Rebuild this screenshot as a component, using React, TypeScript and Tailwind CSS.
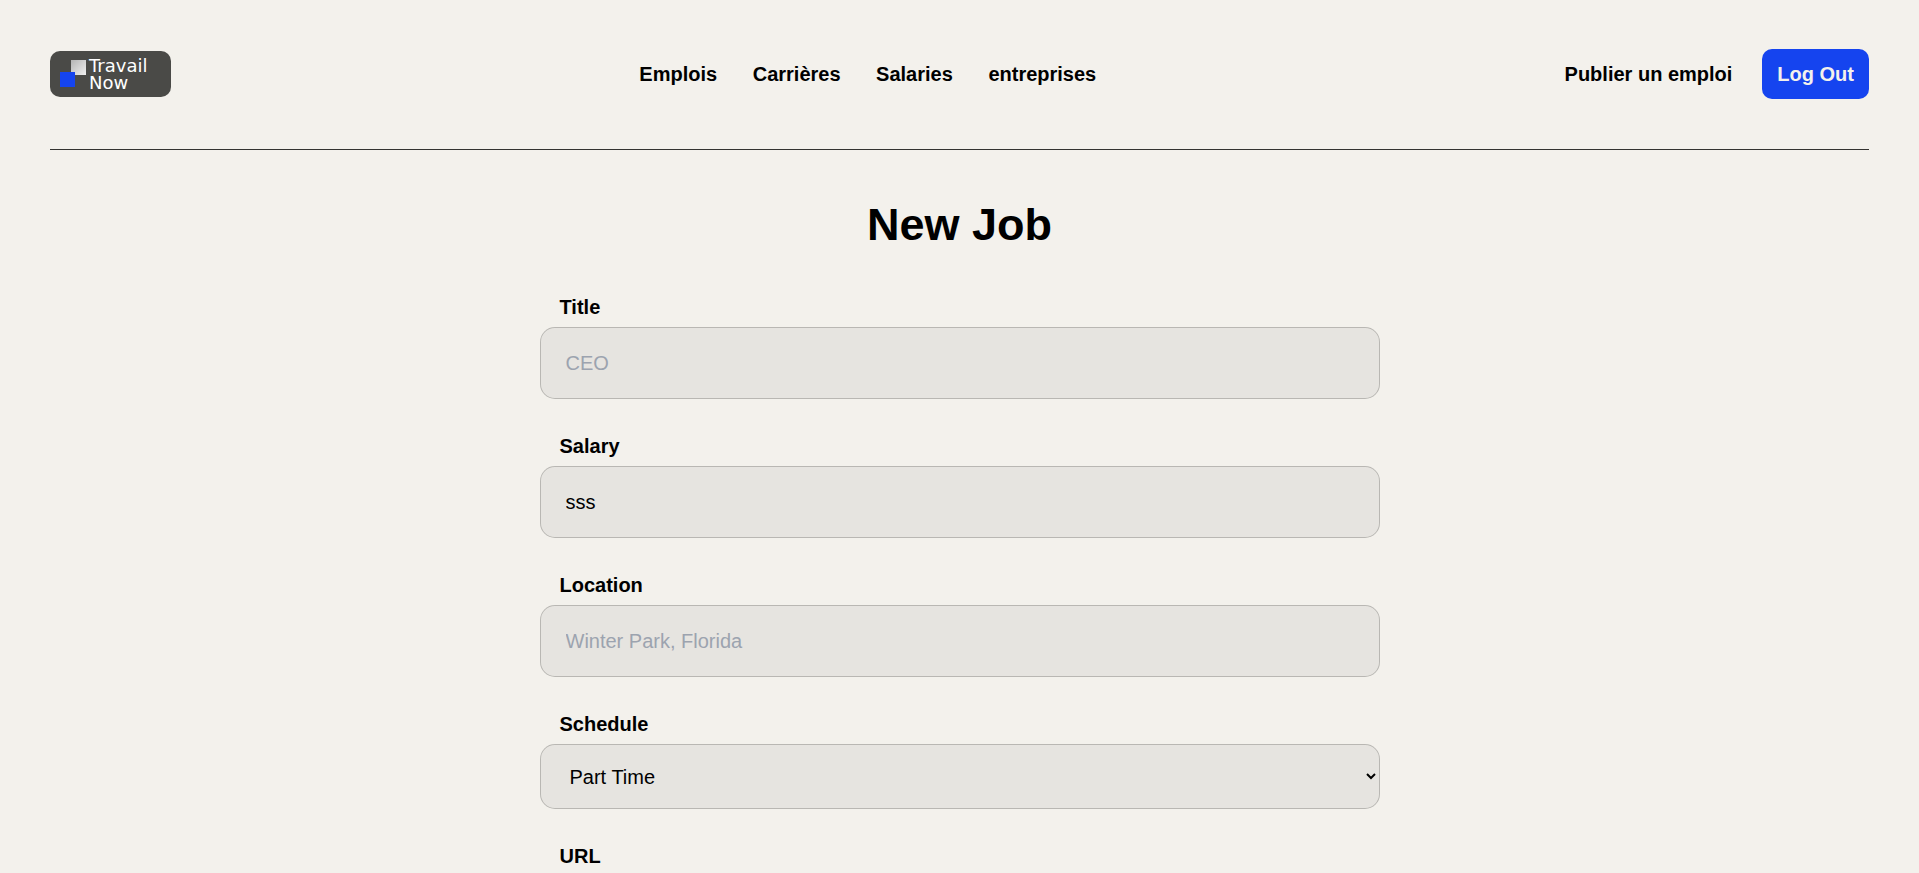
import React from "react";

const navLinks = ["Emplois", "Carrières", "Salaries", "entreprises"];

const controlClass =
  "block w-full rounded-[15px] border border-black/20 bg-black/5 px-[25px] py-5 text-black placeholder:text-[#9ca3af]";

function Logo() {
  return (
    <a
      href="#home"
      aria-label="Travail Now"
      className="flex h-[46px] w-[121px] items-center gap-[2px] rounded-[10px] bg-[#4a4a47] pl-[10px]"
    >
      <svg width="27" height="28" viewBox="0 0 27 28" aria-hidden="true" className="shrink-0">
        <defs>
          <linearGradient id="tile" x1="0" y1="0" x2="1" y2="1">
            <stop offset="0" stopColor="#b4b4b4" />
            <stop offset="1" stopColor="#f0f0f0" />
          </linearGradient>
        </defs>
        <rect x="11" y="0" width="15" height="15" fill="url(#tile)" />
        <rect x="0" y="12" width="15" height="15" fill="#1544ef" />
      </svg>
      <span className="font-['DejaVu_Sans',sans-serif] text-[18px] leading-[17px] font-normal text-white">
        Travail
        <br />
        Now
      </span>
    </a>
  );
}

function Field({ id, label, children }: { id: string; label: string; children: React.ReactNode }) {
  return (
    <div className="flex flex-col gap-[5px]">
      <label htmlFor={id} className="self-start pl-5 font-bold">
        {label}
      </label>
      {children}
    </div>
  );
}

export default function App() {
  return (
    <div className="h-screen overflow-hidden bg-[#f3f1ec] px-[50px] font-['Liberation_Sans',Arial,sans-serif] text-[20px] leading-[30px] text-black">
      <header className="flex items-center justify-between border-b border-[#333330] pt-[49px] pb-[50px] font-bold">
        <Logo />
        <nav className="space-x-[30px]">
          {navLinks.map((name) => (
            <React.Fragment key={name}>
              <a href={"#" + name}>{name}</a>{" "}
            </React.Fragment>
          ))}
        </nav>
        <div className="flex items-center gap-[30px]">
          <a href="#publier">Publier un emploi</a>
          <button type="button" className="rounded-[10px] bg-[#1544ef] px-[15px] py-[10px] text-[#f3f1ec]">
            Log Out
          </button>
        </div>
      </header>

      <main className="mx-auto mt-[50px] max-w-[840px]">
        <h1 className="text-center text-[45px] leading-[50px] font-bold">New Job</h1>
        <form className="mt-[42px] flex flex-col gap-8">
          <Field id="title" label="Title">
            <input id="title" type="text" placeholder="CEO" className={controlClass} />
          </Field>
          <Field id="salary" label="Salary">
            <input id="salary" type="text" defaultValue="sss" className={controlClass} />
          </Field>
          <Field id="location" label="Location">
            <input id="location" type="text" placeholder="Winter Park, Florida" className={controlClass} />
          </Field>
          <Field id="schedule" label="Schedule">
            <select id="schedule" defaultValue="Part Time" className={controlClass + " h-[65px]"}>
              <option>Part Time</option>
              <option>Full Time</option>
            </select>
          </Field>
          <Field id="url" label="URL">
            <input id="url" type="url" className={controlClass} />
          </Field>
        </form>
      </main>
    </div>
  );
}
